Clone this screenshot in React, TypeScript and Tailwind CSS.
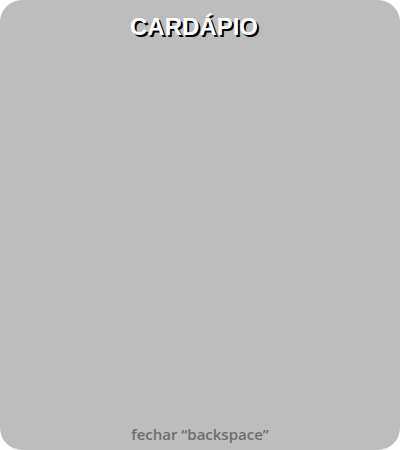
import React from 'react';

const App = () => {
  return (
    <div className="w-[400px] h-[450px] bg-white">
      <div
        className="w-full h-full bg-[#bdbdbd] rounded-[22px] flex flex-col items-center justify-between pt-[12px] pb-[6px]"
        style={{ fontFamily: '"Liberation Sans", Arial, sans-serif' }}
      >
        <h1 className="pr-[12px] text-[24px] leading-[30px] font-bold text-white [text-shadow:2px_2px_0_#000]">
          CARDÁPIO
        </h1>
        <p className="text-[15px] leading-[20px] font-semibold text-[#6e6e6e] [font-family:'Open_Sans',sans-serif]">
          fechar “backspace”
        </p>
      </div>
    </div>
  );
};

export default App;
